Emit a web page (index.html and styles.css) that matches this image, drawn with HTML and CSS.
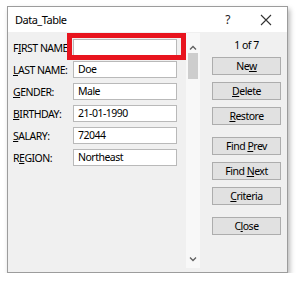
FILE: index.html
```html
<!DOCTYPE html>
<html>
<head>
<meta charset="utf-8">
<link rel="stylesheet" href="styles.css">
</head>
<body>
<div class="window">
  <div class="titlebar">
    <span class="title">Data_Table</span>
    <span class="help">?</span>
    <svg class="close-x" width="12" height="12" viewBox="0 0 12 12"><path d="M1 1L11 11M11 1L1 11" stroke="#333" stroke-width="1.1" fill="none"/></svg>
  </div>
  <div class="content">
    <div class="form">
      <div class="row"><label>F<u>I</u>RST NAME:</label><div class="field"></div></div>
      <div class="row"><label><u>L</u>AST NAME:</label><div class="field">Doe</div></div>
      <div class="row"><label><u>G</u>ENDER:</label><div class="field">Male</div></div>
      <div class="row"><label><u>B</u>IRTHDAY:</label><div class="field">21-01-1990</div></div>
      <div class="row"><label><u>S</u>ALARY:</label><div class="field">72044</div></div>
      <div class="row"><label>R<u>E</u>GION:</label><div class="field">Northeast</div></div>
      <div class="highlight"></div>
    </div>
    <div class="scrollbar">
      <svg class="arrow" width="8" height="5" viewBox="0 0 8 5"><path d="M1 4.5L4 1.5L7 4.5" stroke="#606060" stroke-width="1.3" fill="none"/></svg>
      <div class="thumb"></div>
      <div class="track"></div>
      <svg class="arrow" width="8" height="5" viewBox="0 0 8 5"><path d="M1 0.5L4 3.5L7 0.5" stroke="#606060" stroke-width="1.3" fill="none"/></svg>
    </div>
    <div class="buttons">
      <div class="counter">1 of 7</div>
      <div class="btn">Ne<u>w</u></div>
      <div class="btn"><u>D</u>elete</div>
      <div class="btn"><u>R</u>estore</div>
      <div class="btn group">Find <u>P</u>rev</div>
      <div class="btn">Find <u>N</u>ext</div>
      <div class="btn"><u>C</u>riteria</div>
      <div class="btn group">C<u>l</u>ose</div>
    </div>
  </div>
</div>
</body>
</html>
```
FILE: styles.css
```css
html, body {
  margin: 0;
  padding: 0;
  background: #ffffff;
}
body {
  font-family: "Noto Sans", "Open Sans", sans-serif;
  font-size: 10.5px;
  letter-spacing: -0.5px;
  color: #000;
}
.window {
  margin: 6px 0 0 7px;
  width: 279px;
  height: 265px;
  border: 1px solid #9c9c9c;
  background: #f0f0f0;
  box-shadow: 2px 3px 5px rgba(0,0,0,0.28);
  display: flex;
  flex-direction: column;
}
.titlebar {
  height: 25px;
  background: #ffffff;
  display: flex;
  align-items: center;
  padding-left: 7px;
  flex: none;
}
.title {
  font-size: 11px;
  flex: 1;
}
.help {
  font-size: 12px;
  color: #222;
  margin-right: 30px;
}
.close-x {
  margin-right: 15px;
}
.content {
  flex: 1;
  display: flex;
}
.form {
  position: relative;
  width: 178px;
  padding: 7px 0 0 5px;
  display: flex;
  flex-direction: column;
  gap: 5px;
  box-sizing: border-box;
}
.row {
  display: flex;
  align-items: center;
  height: 17px;
}
label {
  width: 60px;
  white-space: nowrap;
}
.field {
  height: 15px;
  border: 1px solid #b9b9b9;
  background: #fff;
  line-height: 15px;
  padding-left: 4px;
  box-sizing: content-box;
  width: 98px;
}
.highlight {
  position: absolute;
  left: 59px;
  top: 1px;
  width: 109px;
  height: 17px;
  border: 5px solid #e8141e;
}
.scrollbar {
  width: 14px;
  margin: 1px 0 4px 0;
  background: #f8f8f8;
  display: flex;
  flex-direction: column;
  align-items: center;
  padding-top: 12px;
  padding-bottom: 6px;
  box-sizing: border-box;
}
.thumb {
  width: 10px;
  height: 26px;
  background: #cdcdcd;
  margin-top: 3px;
}
.track {
  flex: 1;
}
.buttons {
  padding: 6px 0 0 12px;
  display: flex;
  flex-direction: column;
  gap: 7px;
}
.counter {
  text-align: center;
  height: 14px;
  line-height: 14px;
  margin-bottom: -2px;
}
.btn {
  width: 67px;
  height: 16px;
  line-height: 16px;
  border: 1px solid #adadad;
  background: #e1e1e1;
  text-align: center;
}
.btn.group {
  margin-top: 5px;
}
```
